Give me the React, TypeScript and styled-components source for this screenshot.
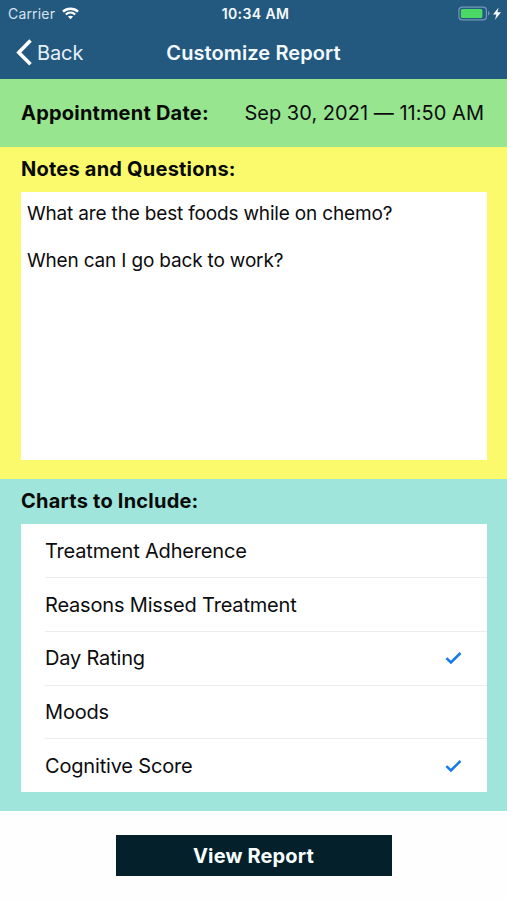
import React from 'react';
import styled, { createGlobalStyle } from 'styled-components';

const GlobalStyle = createGlobalStyle`
  * { box-sizing: border-box; }
  body { margin: 0; background: #fff; }
`;

const Screen = styled.div`
  width: 507px;
  height: 900px;
  display: flex;
  flex-direction: column;
  overflow: hidden;
  background: #fefefe;
  color: #0c0c0e;
  font-family: Inter, 'Liberation Sans', sans-serif;
  font-size: 20px;
`;

const Header = styled.header`
  height: 79px;
  flex: none;
  background: #24597f;
  color: #f4fbff;
`;

const StatusBar = styled.div`
  height: 27px;
  display: grid;
  grid-template-columns: 1fr auto 1fr;
  align-items: center;
  padding: 0 5px 0 8px;
`;

const Carrier = styled.div`
  display: flex;
  align-items: center;
  gap: 7px;
  color: #d5e3ee;
  font-size: 14px;
  letter-spacing: 0.18px;
`;

const Clock = styled.div`
  padding-left: 1px;
  font-size: 14px;
  font-weight: 600;
  letter-spacing: 0.4px;
`;

const Battery = styled.div`
  display: flex;
  justify-content: flex-end;
`;

const NavBar = styled.div`
  height: 52px;
  display: grid;
  grid-template-columns: 1fr auto 1fr;
  align-items: center;
  padding: 0 16px;
`;

const BackButton = styled.button`
  display: flex;
  align-items: center;
  gap: 4px;
  padding: 0;
  border: 0;
  background: none;
  color: #e6f1fa;
  font: inherit;
  letter-spacing: -0.1px;
`;

const Title = styled.h1`
  margin: 0;
  font-size: 20px;
  font-weight: 600;
  letter-spacing: 0.1px;
`;

const Appointment = styled.section`
  height: 68px;
  flex: none;
  display: flex;
  align-items: center;
  justify-content: space-between;
  padding: 0 23px 0 21px;
  background: #97e58e;
`;

const Label = styled.h2`
  margin: 0;
  font-size: 20px;
  line-height: 24px;
  font-weight: 700;
  letter-spacing: 0.22px;
  color: #080a08;
`;

const DateValue = styled.span`
  letter-spacing: 0.03px;
`;

const Section = styled.section<{ $tone: string }>`
  flex: none;
  height: 332px;
  padding: 10px 20px 19px 21px;
  display: flex;
  flex-direction: column;
  gap: 11px;
  background: ${(p) => p.$tone};
`;

const Notes = styled.div`
  flex: 1;
  padding: 10px 6px;
  background: #fff;
  font-size: 19px;
  line-height: 23.3px;
  letter-spacing: -0.17px;
  white-space: pre-wrap;
`;

const List = styled.ul`
  flex: 1;
  margin: 0;
  padding: 0 0 0 24px;
  list-style: none;
  display: grid;
  grid-template-rows: 53px 54px repeat(3, 1fr);
  background: #fff;
`;

const Item = styled.li`
  display: flex;
  align-items: center;
  justify-content: space-between;
  padding-right: 25px;
  letter-spacing: -0.18px;
  & + & { border-top: 1px solid #ececee; }
`;

const Footer = styled.footer`
  flex: 1;
  display: flex;
  justify-content: center;
  align-items: flex-start;
  padding-top: 24px;
`;

const ReportButton = styled.button`
  width: 276px;
  height: 41px;
  padding: 0;
  border: 0;
  background: #04212b;
  color: #f8ffff;
  font: inherit;
  font-weight: 700;
  letter-spacing: 0.15px;
`;

const charts = [
  { name: 'Treatment Adherence', selected: false },
  { name: 'Reasons Missed Treatment', selected: false },
  { name: 'Day Rating', selected: true },
  { name: 'Moods', selected: false },
  { name: 'Cognitive Score', selected: true },
];

const WifiIcon = () => (
  <svg width="17" height="13" viewBox="0 0 17 13" fill="none" stroke="#fff">
    <path d="M1 4.6C5.2.7 11.8.7 16 4.6" strokeWidth="2.5" />
    <path d="M3.8 7.5c2.7-2.5 6.7-2.5 9.4 0" strokeWidth="2.2" />
    <path d="M8.5 12.2 5.9 9.6c1.5-1.3 3.7-1.3 5.2 0Z" fill="#fff" stroke="none" />
  </svg>
);

const BatteryIcon = () => (
  <svg width="44" height="16" viewBox="0 0 44 16" fill="none">
    <rect x="0.9" y="1.1" width="27.5" height="12.8" rx="3.4" stroke="#7297b7" strokeWidth="1.2" />
    <rect x="2.8" y="3" width="21.6" height="9" rx="1.6" fill="#4bd965" />
    <path d="M30 5.3c2 .6 2 3.6 0 4.2Z" fill="#7297b7" />
    <path d="M40.6 1.4 35 8.4h3.4L37 13.8l6-7.6h-3.6Z" fill="#fff" />
  </svg>
);

const BackChevron = () => (
  <svg width="17" height="28" viewBox="0 0 17 28" fill="none" stroke="#fff" strokeWidth="3.6">
    <path d="M14.5 1.6 2.8 13.4 14.5 25.2" />
  </svg>
);

const CheckIcon = () => (
  <svg width="17" height="14" viewBox="0 0 17 14" fill="none" stroke="#147aed" strokeWidth="2.5">
    <path d="M1.4 7.2 5.9 11.4 15.5 2" />
  </svg>
);

export default function App() {
  return (
    <Screen>
      <GlobalStyle />
      <Header>
        <StatusBar>
          <Carrier>Carrier<WifiIcon /></Carrier>
          <Clock>10:34 AM</Clock>
          <Battery><BatteryIcon /></Battery>
        </StatusBar>
        <NavBar>
          <BackButton><BackChevron />Back</BackButton>
          <Title>Customize Report</Title>
        </NavBar>
      </Header>
      <Appointment>
        <Label>Appointment Date:</Label>
        <DateValue>Sep 30, 2021 — 11:50 AM</DateValue>
      </Appointment>
      <Section $tone="#fafa6c">
        <Label>Notes and Questions:</Label>
        <Notes>{'What are the best foods while on chemo?\n\nWhen can I go back to work?'}</Notes>
      </Section>
      <Section $tone="#9fe5dc">
        <Label>Charts to Include:</Label>
        <List>
          {charts.map((chart) => (
            <Item key={chart.name}>
              {chart.name}
              {chart.selected && <CheckIcon />}
            </Item>
          ))}
        </List>
      </Section>
      <Footer>
        <ReportButton>View Report</ReportButton>
      </Footer>
    </Screen>
  );
}
